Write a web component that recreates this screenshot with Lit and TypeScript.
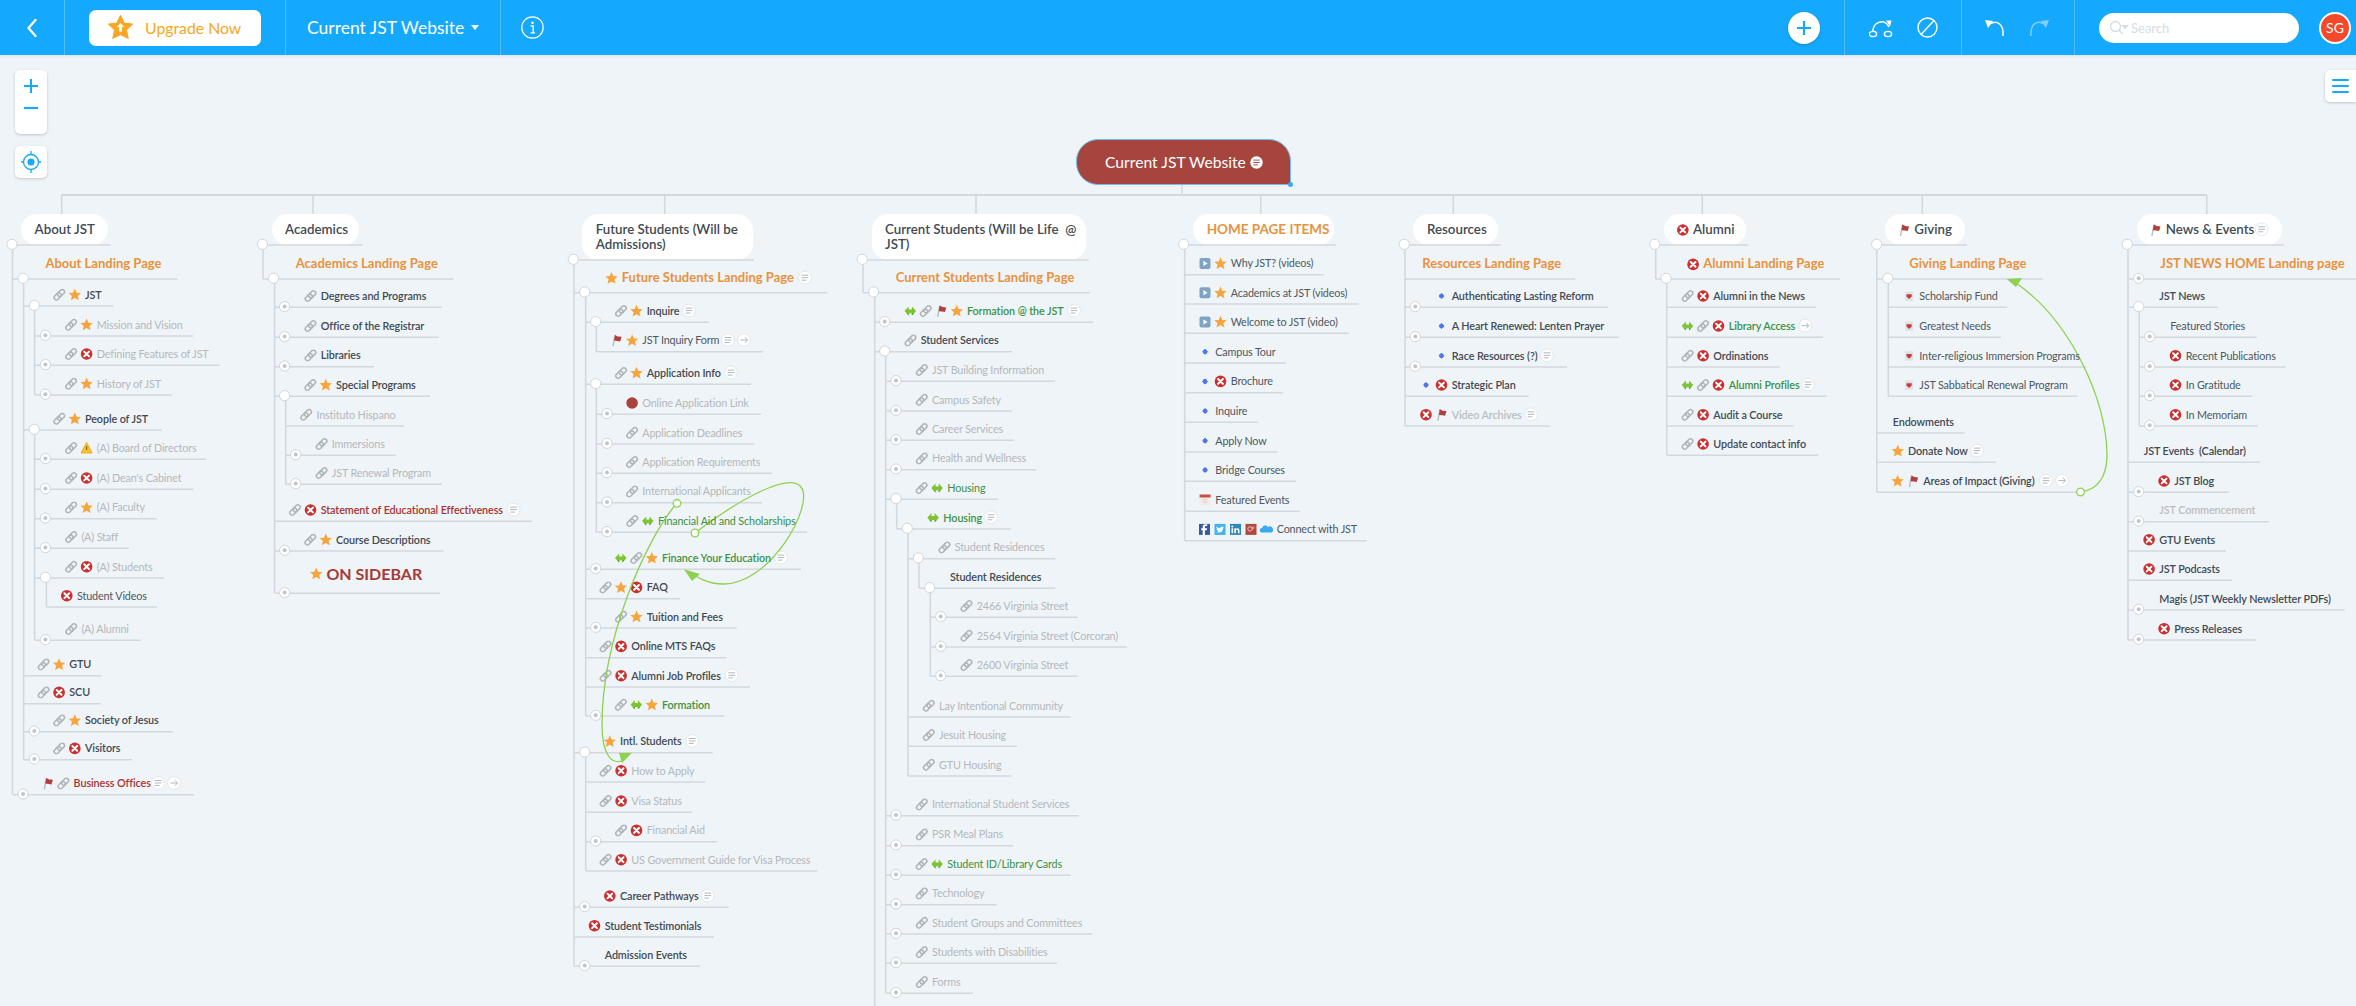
import { LitElement, html, css, svg } from "lit";
import { customElement } from "lit/decorators.js";

type Node = { t: string; x: number; l: number; x0: number; x1: number; c: string; i: string; tog: number; b?: { n?: number; a?: number }; cy?: number };
const N = (t: string, x: number, l: number, x0: number, x1: number, c: string, i = "", tog = 0, b?: { n?: number; a?: number }, cy?: number): Node => ({ t, x, l, x0, x1, c, i, tog, b, cy });

// tog > 0: toggle with dot, tog < 0: open (expanded) toggle
const nodes: Node[] = [
  // About
  N("About JST", 34.6, 245, 12, 110.7, "top", "", -12),
  N("About Landing Page", 45.4, 279, 13, 177.5, "o", "", -23.2),
  N("JST", 85, 306, 24, 113.6, "b", "c s", -34.3),
  N("Mission and Vision", 96.8, 336, 35, 193, "g", "c s", 45.4),
  N("Defining Features of JST", 96.8, 365.3, 35, 219.6, "g", "c x", 45.4),
  N("History of JST", 96.8, 395, 35, 172, "g", "c s", 45.4),
  N("People of JST", 85, 430, 24, 162, "b", "c s", -34.3),
  N("(A) Board of Directors", 96.8, 459.3, 35, 206.4, "g", "c w", 45.4),
  N("(A) Dean's Cabinet", 96.8, 489.3, 35, 193.6, "g", "c x", 45.4),
  N("(A) Faculty", 96.8, 518.7, 35, 156.8, "g", "c s", 45.4),
  N("(A) Staff", 81.4, 548.3, 35, 129, "g", "c", 45.4),
  N("(A) Students", 96.8, 578, 35, 164, "g", "c x", -45.4),
  N("Student Videos", 77, 607, 46.4, 157, "r", "x"),
  N("(A) Alumni", 81.4, 640.3, 35, 141, "g", "c", 45.4),
  N("GTU", 69.3, 675.7, 24, 101.4, "b", "c s"),
  N("SCU", 69.3, 703.7, 24, 100.7, "b", "c x"),
  N("Society of Jesus", 85, 731.7, 24, 172.9, "b", "c s", 34.3),
  N("Visitors", 85, 759.7, 24, 132, "b", "c x", 34.3),
  N("Business Offices", 73.6, 794.7, 13, 194, "rd", "f c", 23, { n: 158, a: 174 }),
  // Academics
  N("Academics", 285, 245, 263, 362.5, "top", "", -262.5),
  N("Academics Landing Page", 295.7, 279, 263, 453.6, "o", "", -273.6),
  N("Degrees and Programs", 320.7, 307.3, 275, 441.8, "b", "c", 284.6),
  N("Office of the Registrar", 320.7, 337.3, 275, 438.6, "b", "c", 284.6),
  N("Libraries", 320.7, 366.7, 275, 374, "b", "c", 284.6),
  N("Special Programs", 336, 396.3, 275, 430, "b", "c s", -284.6),
  N("Instituto Hispano", 316.4, 426, 285.7, 404, "g", "c"),
  N("Immersions", 331.8, 455.3, 285.7, 395.7, "g", "c", 295.7),
  N("JST Renewal Program", 331.8, 484.3, 285.7, 442, "g", "c", 295.7),
  N("Statement of Educational Effectiveness", 320.7, 521.3, 275, 532, "rd", "c x", 0, { n: 513.6 }),
  N("Course Descriptions", 336, 551, 275, 443.6, "b", "c s", 284.6),
  N("ON SIDEBAR", 326.4, 593.3, 275, 440, "big", "s", 284.6),
  // Future
  N("Future Students (Will be\nAdmissions)", 595.7, 260, 574, 754, "top", "", -573.3, undefined, 229),
  N("Future Students Landing Page", 621.7, 292.7, 574, 827.3, "o", "s", -584.7, { n: 805 }),
  N("Inquire", 646.7, 322.3, 586, 709, "b", "c s", -595.7, { n: 689 }),
  N("JST Inquiry Form", 642.3, 351.7, 596.3, 762.7, "r", "f s", 0, { n: 728, a: 744 }),
  N("Application Info", 646.7, 384.3, 586, 751, "b", "c s", -595.7, { n: 731 }),
  N("Online Application Link", 642.3, 414.3, 596.3, 761, "g", "rd", 607),
  N("Application Deadlines", 642.3, 444, 596.3, 754.3, "g", "c", 607),
  N("Application Requirements", 642.3, 473.3, 596.3, 772, "g", "c", 607),
  N("International Applicants", 642.3, 502.7, 596.3, 762, "g", "c", 607),
  N("Financial Aid and Scholarships", 658, 532.3, 596.3, 807, "gr", "c g", 607),
  N("Finance Your Education", 662, 569.3, 586, 801, "grb", "g c s", 595.7, { n: 781 }),
  N("FAQ", 646.7, 598.7, 586, 680, "b", "c s x"),
  N("Tuition and Fees", 646.7, 628, 586, 736.7, "b", "c s", 595.7),
  N("Online MTS FAQs", 631.3, 657.7, 586, 726.7, "b", "c x"),
  N("Alumni Job Profiles", 631.3, 687, 586, 750, "b", "c x", 0, { n: 731.7 }),
  N("Formation", 662, 716, 586, 724.3, "grb", "c g s", 595.7),
  N("Intl. Students", 620, 752.7, 574, 712.7, "b", "s", -584.7, { n: 692.3 }),
  N("How to Apply", 631.3, 782, 586, 705.3, "g", "c x"),
  N("Visa Status", 631.3, 812.3, 586, 691.7, "g", "c x"),
  N("Financial Aid", 646.7, 841.7, 586, 717, "g", "c x", 595.7),
  N("US Government Guide for Visa Process", 631.3, 871, 586, 817.3, "g", "c x"),
  N("Career Pathways", 620, 907.3, 574, 728.7, "b", "x", 584.7, { n: 707.7 }),
  N("Student Testimonials", 604.7, 937, 574, 713.7, "b", "x"),
  N("Admission Events", 604.7, 966.3, 574, 700, "b", "", 584.7),
  // Current
  N("Current Students (Will be Life  @\nJST)", 885, 260, 863, 1088.7, "top", "", -862.3, undefined, 229),
  N("Current Students Landing Page", 895.7, 292.7, 863, 1090, "o", "", -873.7),
  N("Formation @ the JST", 967, 322.3, 875, 1093.3, "grb", "g c f s", 884.7, { n: 1074 }),
  N("Student Services", 920.7, 351.7, 875, 1012, "b", "c", -884.7),
  N("JST Building Information", 932, 381.3, 886, 1055.3, "g", "c", 896),
  N("Campus Safety", 932, 411, 886, 1012, "g", "c", 896),
  N("Career Services", 932, 440.3, 886, 1014, "g", "c", 896),
  N("Health and Wellness", 932, 469.7, 886, 1036.3, "g", "c", 896),
  N("Housing", 947.3, 499.3, 886, 998, "gr", "c g", -896),
  N("Housing", 943.3, 529, 896.7, 1010.7, "grb", "g", -907.3, { n: 991 }),
  N("Student Residences", 954.7, 558.7, 908, 1055.3, "g", "c", -918.3),
  N("Student Residences", 950, 588.3, 919, 1055.3, "b", "", -929.7),
  N("2466 Virginia Street", 976.7, 617.3, 930.3, 1077.7, "g", "c", 940.7),
  N("2564 Virginia Street (Corcoran)", 976.7, 647, 930.3, 1126.7, "g", "c", 940.7),
  N("2600 Virginia Street", 976.7, 676.3, 930.3, 1077.7, "g", "c", 940.7),
  N("Lay Intentional Community", 939, 717, 908, 1070.7, "g", "c"),
  N("Jesuit Housing", 939, 746.3, 908, 1017, "g", "c"),
  N("GTU Housing", 939, 776, 908, 1011.3, "g", "c"),
  N("International Student Services", 932, 815.7, 886, 1078.7, "g", "c", 896),
  N("PSR Meal Plans", 932, 845.7, 886, 1013.3, "g", "c", 896),
  N("Student ID/Library Cards", 947.3, 875.3, 886, 1070.7, "gr", "c g", 896),
  N("Technology", 932, 904.7, 886, 996.7, "g", "c", 896),
  N("Student Groups and Committees", 932, 934, 886, 1092.3, "g", "c", 896),
  N("Students with Disabilities", 932, 963.3, 886, 1057, "g", "c", 896),
  N("Forms", 932, 993.3, 886, 973, "g", "c", 896),
  // Home page
  N("HOME PAGE ITEMS", 1206.7, 245, 1184, 1336, "topo", "", -1183.7),
  N("Why JST? (videos)", 1230.7, 274.7, 1185, 1323.7, "r", "p s"),
  N("Academics at JST (videos)", 1230.7, 304, 1185, 1358.7, "r", "p s"),
  N("Welcome to JST (video)", 1230.7, 333.3, 1185, 1348.7, "r", "p s"),
  N("Campus Tour", 1215.3, 363, 1185, 1286, "r", "d"),
  N("Brochure", 1230.7, 392.7, 1185, 1282.7, "r", "d x"),
  N("Inquire", 1215.3, 422.3, 1185, 1258.3, "r", "d"),
  N("Apply Now", 1215.3, 452, 1185, 1277.3, "r", "d"),
  N("Bridge Courses", 1215.3, 481.3, 1185, 1296, "r", "d"),
  N("Featured Events", 1215.3, 511.3, 1185, 1299.7, "r", "cal"),
  N("Connect with JST", 1276.7, 540.7, 1185, 1366.7, "r", "fb tw in gp cl"),
  // Resources
  N("Resources", 1427, 245, 1404, 1500.7, "top", "", -1404.3),
  N("Resources Landing Page", 1422.3, 279, 1405, 1575.3, "o"),
  N("Authenticating Lasting Reform", 1451.7, 307.3, 1405, 1607.7, "b", "d", 1415.3),
  N("A Heart Renewed: Lenten Prayer", 1451.7, 337.3, 1405, 1618.7, "b", "d", 1415.3),
  N("Race Resources (?)", 1451.7, 367, 1405, 1567, "b", "d", 1415.3, { n: 1547 }),
  N("Strategic Plan", 1451.7, 396.3, 1405, 1528.7, "b", "d x"),
  N("Video Archives", 1451.7, 426, 1405, 1549.7, "gb", "x f", 0, { n: 1531 }),
  // Alumni
  N("Alumni", 1693, 245, 1654, 1748.3, "top", "x", -1654.7),
  N("Alumni Landing Page", 1703.3, 279, 1655.7, 1840, "o", "x", -1666),
  N("Alumni in the News", 1713.3, 307.3, 1667, 1816.3, "b", "c x"),
  N("Library Access", 1728.7, 337.3, 1667, 1823, "grb", "g c x", 0, { a: 1805.3 }),
  N("Ordinations", 1713.3, 367, 1667, 1779.7, "b", "c x"),
  N("Alumni Profiles", 1728.7, 396.3, 1667, 1826.7, "grb", "g c x", 0, { n: 1808 }),
  N("Audit a Course", 1713.3, 426, 1667, 1794.3, "b", "c x"),
  N("Update contact info", 1713.3, 455.3, 1667, 1818.3, "b", "c x"),
  // Giving
  N("Giving", 1914.3, 245, 1876, 1967, "top", "f", -1876.7),
  N("Giving Landing Page", 1909.3, 279, 1877, 2042.7, "o", "", -1887.7),
  N("Scholarship Fund", 1919.3, 307.3, 1888.3, 2007.3, "r", "rb"),
  N("Greatest Needs", 1919.3, 337.3, 1888.3, 2001, "r", "rb"),
  N("Inter-religious Immersion Programs", 1919.3, 367, 1888.3, 2086.3, "r", "rb"),
  N("JST Sabbatical Renewal Program", 1919.3, 396.3, 1888.3, 2077.3, "r", "rb"),
  N("Endowments", 1892.7, 433, 1877, 1964.7, "b"),
  N("Donate Now", 1908, 462.3, 1877, 1995.7, "b", "s", 0, { n: 1977 }),
  N("Areas of Impact (Giving)", 1923.3, 492.3, 1877, 2080.7, "b", "s f", 0, { n: 2046, a: 2062 }),
  // News
  N("News & Events", 2165.7, 245, 2127, 2284, "top", "f", -2127.3, { n: 2261.7 }),
  N("JST NEWS HOME Landing page", 2160.3, 279, 2128, 2356, "o", "", 2138.7),
  N("JST News", 2159.3, 307.3, 2128, 2218, "b", "", -2138.7),
  N("Featured Stories", 2170.3, 337.3, 2139.3, 2256.7, "r", "", 2149.7),
  N("Recent Publications", 2185.7, 367, 2139.3, 2285.7, "r", "x", 2149.7),
  N("In Gratitude", 2185.7, 396.3, 2139.3, 2252.3, "r", "x", 2149.7),
  N("In Memoriam", 2185.7, 426, 2139.3, 2258, "r", "x", 2149.7),
  N("JST Events  (Calendar)", 2143.7, 462.3, 2128, 2260, "b"),
  N("JST Blog", 2174.3, 492.3, 2128, 2228.7, "b", "x", 2138.7),
  N("JST Commencement", 2159.3, 521.7, 2128, 2268.7, "gb", "", 2138.7),
  N("GTU Events", 2159.3, 551, 2128, 2226, "b", "x"),
  N("JST Podcasts", 2159.3, 580.3, 2128, 2232, "b", "x"),
  N("Magis (JST Weekly Newsletter PDFs)", 2159.3, 610, 2128, 2344.7, "b", "", 2138.7),
  N("Press Releases", 2174.3, 640, 2128, 2256, "b", "x", 2138.7),
];

const trunks: number[][] = [
  [12.5, 245, 794.7], [23.6, 279, 759.7], [34.6, 306, 395], [34.6, 430, 640.3], [46.4, 578, 607],
  [263, 245, 279], [274.6, 279, 593.3], [285.7, 396, 484.3],
  [574, 260, 966.3], [585.7, 293, 716], [596.3, 322, 351.7], [596.3, 384, 532.3], [585.7, 752, 871],
  [863, 260, 292.7], [874.7, 293, 1006], [885.7, 352, 993.3], [896.7, 499, 529], [908, 529, 776], [919, 558, 588.3], [930.3, 588, 676.3],
  [1184.7, 245, 540.7], [1405, 245, 426], [1655.7, 245, 279], [1666.7, 279, 455.3],
  [1876.7, 245, 492.3], [1888.3, 279, 396.3], [2128, 245, 640], [2139.3, 307, 426],
];
const drops = [61.7, 313, 664.7, 976, 1260.7, 1453.3, 1702.3, 1922.3, 2206.7];
const pills = [
  [21, 108, 214, 245], [272, 359, 214, 245], [582, 752.7, 214, 260], [872, 1086, 214, 260],
  [1193, 1334, 214, 245], [1413.3, 1498, 214, 245], [1664, 1746.3, 214, 245], [1885.3, 1965, 214, 245], [2136.7, 2282, 214, 245],
];

function icon(k: string, x: number, y: number) {
  const g = (c: unknown) => svg`<g transform="translate(${x} ${y})">${c}</g>`;
  switch (k) {
    case "c":
      return g(svg`<g transform="rotate(-45)" fill="none" stroke="#aeb4b8" stroke-width="1.5"><rect x="-6.4" y="-2.3" width="8" height="4.6" rx="2.3"/><rect x="-1.6" y="-2.3" width="8" height="4.6" rx="2.3"/></g>`);
    case "s":
      return g(svg`<path d="M0-6.2 1.8-2 6.2-1.7 2.9 1.2 4 5.6 0 3.3-4 5.6-2.9 1.2-6.2-1.7-1.8-2Z" fill="#f7a43c"/>`);
    case "x":
      return g(svg`<circle r="5.8" fill="#c9302f"/><path d="M-2.4-2.4 2.4 2.4M2.4-2.4-2.4 2.4" stroke="#fff" stroke-width="2" stroke-linecap="round"/>`);
    case "w":
      return g(svg`<path d="M0-5.5 5.6 5H-5.6Z" fill="#f5bf2e" stroke="#eeb024" stroke-linejoin="round"/><rect x="-.6" y="-2" width="1.2" height="4" fill="#8a6b12"/>`);
    case "f":
      return g(svg`<path d="M-3.6 6-1.6-5.5" stroke="#b9bcbe" stroke-width="1.4"/><path d="M-1.6-5.5 1.2-4 5-3.6 3.6 1 .8.6-2.6.2Z" fill="#b03f3d"/>`);
    case "g":
      return g(svg`<path d="M-5.8 0-1.6-4.6V-1.6H1.6V-4.6L5.8 0 1.6 4.6V1.6H-1.6V4.6Z" fill="#7cc52f"/><path d="M-3.8 2.2-1.6 4.6V1.6H1.6V4.6L3.8 2.2Z" fill="#57a51f"/>`);
    case "d":
      return g(svg`<path d="M0-3 2.8 0 0 3-2.8 0Z" fill="#4f76ee"/><circle r="2.3" fill="#4f76ee"/>`);
    case "p":
      return g(svg`<rect x="-5.5" y="-5.5" width="11" height="11" rx="2" fill="#7ea3c4"/><path d="M-1.6-2.6 2.6 0-1.6 2.6Z" fill="#fff"/>`);
    case "rd":
      return g(svg`<circle r="5.8" fill="#a8433e"/>`);
    case "rb":
      return g(svg`<rect x="-4" y="-4.5" width="8" height="9.5" fill="#dfe3e6"/><path d="M-2.6-1.8H2.6V.6L0 3-2.6.6Z" fill="#c93a3a"/>`);
    case "cal":
      return g(svg`<rect x="-5.5" y="-5.5" width="11" height="11" fill="#f3ecea"/><rect x="-5.5" y="-5.5" width="11" height="3" fill="#c8503f"/><path d="M-3-.5H3M-3 2H3M0-1.5V4" stroke="#e3c4be" stroke-width=".6"/>`);
    case "fb":
      return g(svg`<rect x="-5.5" y="-5.5" width="11" height="11" fill="#3b5a9a"/><path d="M.4 5.5V.8H2.3L2.6-1.2H.4V-2.4C.4-3.1.8-3.4 1.4-3.4H2.7V-5.2H.8C-1-5.2-1.8-4.2-1.8-2.6V-1.2H-3.2V.8H-1.8V5.5Z" fill="#fff"/>`);
    case "tw":
      return g(svg`<rect x="-5.5" y="-5.5" width="11" height="11" fill="#3eb4ea"/><path d="M-3.6 2.6C-1 4 3.2 3 3.2-1.6L4-2.6 2.8-2.4C2-3.6 0-3 .2-1.2-1.2-1.2-2.4-2-3.2-3-3.8-2-3.4-1-2.8-.4L-3.4-.6C-3.4.4-2.6 1-2 1.2H-2.6C-2.4 1.8-1.8 2.2-1.2 2.2-1.8 2.6-2.8 2.8-3.6 2.6Z" fill="#fff"/>`);
    case "in":
      return g(svg`<rect x="-5.5" y="-5.5" width="11" height="11" fill="#2f86ba"/><rect x="-4" y="-1.2" width="1.6" height="5" fill="#fff"/><circle cx="-3.2" cy="-3" r="1" fill="#fff"/><path d="M-1.2 3.8V-1.2H.4V-.4C1.4-1.8 4-1.6 4 1V3.8H2.4V1.4C2.4 0 .4 0 .4 1.4V3.8Z" fill="#fff"/>`);
    case "gp":
      return g(svg`<rect x="-5.5" y="-5.5" width="11" height="11" fill="#b0493f"/><circle cx="-1" cy="-.5" r="2.2" fill="none" stroke="#e8c1bc" stroke-width="1"/><path d="M2-3V0M.5-1.5H3.5" stroke="#e8c1bc" stroke-width=".8"/>`);
    case "cl":
      return g(svg`<path d="M-4.5 3.2A2.3 2.3 0 0 1-4.4-1.4 3.2 3.2 0 0 1 1.4-2.4 2.8 2.8 0 0 1 5 3.2Z" fill="#38a9ee"/>`);
  }
  return null;
}

@customElement("app-root")
export class AppRoot extends LitElement {
  static styles = css`
    :host { display: flex; flex-direction: column; height: 1006px; overflow: hidden; background: #eff4f8; font-family: Lato, "Open Sans", sans-serif; }
    .hdr { display: flex; align-items: stretch; height: 55px; flex: none; background: #15a9fe; color: #fff; position: relative; z-index: 2; box-shadow: 0 1px 3px rgba(60,90,110,.15); }
    .sec { display: flex; align-items: center; border-right: 1px solid rgba(255,255,255,.25); flex: none; box-sizing: border-box; }
    .s1 { width: 65px; justify-content: center; }
    .s2 { width: 221px; padding-left: 24px; }
    .s3 { width: 215px; padding-left: 21px; gap: 7px; font-size: 17.5px; }
    .s4 { flex: 1; padding-left: 20px; justify-content: flex-start; gap: 0; position: relative; }
    .s5 { width: 117px; padding-left: 24px; gap: 24px; }
    .s6 { width: 113px; padding-left: 22px; gap: 22px; }
    .s7 { flex: none; width: 281px; display: flex; align-items: center; padding-left: 24px; box-sizing: border-box; }
    .up { display: flex; align-items: center; gap: 12px; width: 172px; height: 36px; box-sizing: border-box; padding-left: 19px; background: #fff; border-radius: 7px; color: #f9a623; font-size: 15.8px; }
    .plus { margin-left: auto; margin-right: 24px; width: 32px; height: 32px; border-radius: 50%; background: #fff; display: flex; align-items: center; justify-content: center; box-shadow: 0 1px 3px rgba(0,60,110,.3); }
    .search { width: 200px; height: 30px; border-radius: 15px; background: #fff; display: flex; align-items: center; padding-left: 10px; gap: 2px; box-sizing: border-box; color: #d5dde2; font-size: 13px; }
    .av { margin-left: 20px; width: 32px; height: 32px; border-radius: 50%; background: #f4492b; border: 2px solid #fff; box-sizing: border-box; display: flex; align-items: center; justify-content: center; font-size: 14px; color: #fff; }
    .cv { flex: 1; position: relative; overflow: hidden; }
    .lay { position: absolute; left: 0; top: 0; width: 2356px; height: 951px; }
    .panel { position: absolute; background: #fff; border-radius: 5px; box-shadow: 0 1px 3px rgba(60,80,100,.28); display: flex; flex-direction: column; align-items: center; justify-content: center; }
    .pz { left: 15px; top: 15px; width: 32px; height: 64px; gap: 12.7px; justify-content: flex-start; padding-top: 9px; box-sizing: border-box; }
    .pt { left: 15px; top: 91px; width: 32px; height: 32px; }
    .pm { right: 0; top: 15px; width: 31px; height: 32px; border-radius: 5px 0 0 5px; gap: 4px; }
    .pm i { display: block; width: 17px; height: 2px; background: #15a9fe; border-radius: 1px; }
    .pill { position: absolute; background: #fff; border-radius: 16px; }
    .root { position: absolute; left: 1076px; top: 84px; width: 215px; height: 46px; box-sizing: border-box; background: #a6453e; border: 1.5px solid #6cbdf2; border-radius: 22px 22px 0 22px; color: #fff; font-size: 15.7px; display: flex; align-items: center; padding-left: 28px; gap: 4.5px; }
    .root svg { flex: none; }
    .hd { position: absolute; right: -3px; bottom: -3px; width: 5px; height: 5px; border-radius: 50%; background: #3fa9f5; }
    .n { position: absolute; white-space: pre; line-height: 15px; }
    .b { font-size: 10.8px; letter-spacing: -.1px; font-weight: 600; color: #3f4a52; }
    .r { font-size: 10.8px; letter-spacing: -.15px; color: #4d5860; }
    .g { font-size: 10.8px; letter-spacing: -.15px; color: #b3b8bb; }
    .gb { font-size: 10.8px; letter-spacing: -.1px; font-weight: 600; color: #b9bec1; }
    .gr { font-size: 10.8px; letter-spacing: -.15px; color: #3c9243; }
    .grb { font-size: 10.8px; letter-spacing: -.1px; font-weight: 600; color: #3c9243; }
    .rd { font-size: 10.8px; letter-spacing: -.1px; font-weight: 600; color: #a8322f; }
    .o { font-size: 13px; font-weight: 700; color: #e9923e; }
    .big { font-size: 16px; font-weight: 700; color: #a63a36; }
    .top { font-size: 13.3px; font-weight: 600; color: #3f4a52; }
    .topo { font-size: 13.5px; font-weight: 700; color: #e9923e; }
  `;

  render() {
    const cyOf = (n: Node) => {
      if (n.cy) return n.cy;
      if (n.c === "top" || n.c === "topo") return n.l - 16;
      if (n.c === "o") return n.l - 15.3;
      if (n.c === "big") return n.l - 20.3;
      return n.l - 12;
    };
    return html`
      <div class="hdr">
        <div class="sec s1">
          <svg width="14" height="20" viewBox="0 0 14 20"><path d="M10.5 2 3.5 10 10.5 18" fill="none" stroke="#fff" stroke-width="2.4" stroke-linecap="round" stroke-linejoin="round"/></svg>
        </div>
        <div class="sec s2">
          <div class="up">
            <svg width="25" height="25" viewBox="-12.5 -12.5 25 25"><path d="M0-12.2 3.8-4.4 12.2-3.4 6 2.4 7.8 11 0 7.2-7.8 11-6 2.4-12.2-3.4-3.8-4.4Z" fill="#f9a623" stroke="#f9a623" stroke-width="1" stroke-linejoin="round"/><path d="M0-4.5 3.6-.5H1.4V4.2H-1.4V-.5H-3.6Z" fill="#fff"/></svg>
            <span>Upgrade Now</span>
          </div>
        </div>
        <div class="sec s3">
          <span>Current JST Website</span>
          <svg width="8" height="5" viewBox="0 0 8 5"><path d="M0 0H8L4 5Z" fill="#fff"/></svg>
        </div>
        <div class="sec s4">
          <svg width="23" height="23" viewBox="0 0 23 23"><circle cx="11.5" cy="11.5" r="10.7" fill="none" stroke="#fff" stroke-width="1.2"/><circle cx="11.5" cy="6.8" r="1.2" fill="#fff"/><path d="M9.6 10H12.2V16.4M9.6 16.8H14" fill="none" stroke="#fff" stroke-width="1.3"/></svg>
          <div class="plus"><svg width="14" height="14" viewBox="0 0 14 14"><path d="M7 0V14M0 7H14" stroke="#15a9fe" stroke-width="2.2"/></svg></div>
        </div>
        <div class="sec s5">
          <svg width="24" height="20" viewBox="0 0 24 20" fill="none" stroke="#fff" stroke-width="1.4"><ellipse cx="4" cy="16" rx="3.6" ry="2.6"/><ellipse cx="19" cy="16" rx="3.6" ry="2.6"/><path d="M4 13C4 6 10 3 15 4 18 5 19 7 20 9"/><path d="M17 2.5 22.5 2.5 21 8.5Z" fill="#fff" stroke="none"/></svg>
          <svg width="21" height="21" viewBox="0 0 21 21" fill="none" stroke="#fff" stroke-width="1.4"><circle cx="10.5" cy="10.5" r="9.5"/><path d="M4 17.5 17 3.5"/></svg>
        </div>
        <div class="sec s6">
          <svg width="22" height="20" viewBox="0 0 22 20" fill="none"><path d="M6 6C12 2 20 5 19 18" stroke="#fff" stroke-width="1.5"/><path d="M1 2 9 3 4 10Z" fill="#fff"/></svg>
          <svg width="22" height="20" viewBox="0 0 22 20" fill="none" opacity=".45"><path d="M16 6C10 2 2 5 3 18" stroke="#fff" stroke-width="1.5"/><path d="M21 2 13 3 18 10Z" fill="#fff"/></svg>
        </div>
        <div class="s7">
          <div class="search">
            <svg width="20" height="16" viewBox="0 0 20 16" fill="none" stroke="#d5dde2" stroke-width="1.3"><circle cx="6.5" cy="6.5" r="5"/><path d="M10 10 13.5 14"/><path d="M12 5H20L16 9Z" fill="#d5dde2" stroke="none"/></svg>
            <span>Search</span>
          </div>
          <div class="av">SG</div>
        </div>
      </div>
      <div class="cv">
        ${pills.map((p) => html`<div class="pill" style="left:${p[0]}px;top:${p[2] - 55}px;width:${p[1] - p[0]}px;height:${p[3] - p[2]}px"></div>`)}
        <svg class="lay" viewBox="0 55 2356 951">
          <g fill="none" stroke="#d2d9de" stroke-width="1.6">
            <path d="M61.7 195H2206.7" stroke-width="2"/>
            ${drops.map((x) => svg`<path d="M${x} 195V214"/>`)}
            <path d="M1182 185V195"/>
            ${trunks.map((t) => svg`<path d="M${t[0]} ${t[1]}V${t[2]}"/>`)}
            ${nodes.map((n) => svg`<path d="M${n.x0} ${n.l}H${n.x1}"/>`)}
          </g>
          ${nodes.filter((n) => n.tog).map((n) => {
            const cx = Math.abs(n.tog);
            const cy = n.l - 0.7;
            return svg`<circle cx=${cx} cy=${cy} r="5.1" fill="#fff" stroke="#cfd6db" stroke-width="1"/>${n.tog > 0 ? svg`<circle cx=${cx} cy=${cy} r="2" fill="#bcc6cd"/>` : null}`;
          })}
          ${nodes.map((n) => {
            const ks = n.i ? n.i.split(" ") : [];
            const cy = cyOf(n) + 0.7;
            return ks.map((k, j) => icon(k, n.x - 10.2 - (ks.length - 1 - j) * 15.5, n.c === "top" ? n.l - 15 : cy));
          })}
          ${nodes.map((n) => {
            const cy = cyOf(n) + 0.3;
            const out: unknown[] = [];
            if (n.b?.n) out.push(svg`<g transform="translate(${n.b.n} ${cy})"><circle r="6.4" fill="#fff" stroke="#dfe5e8" stroke-width=".9"/><path d="M-3.4-2.5H3.4M-3.4 0H3.4M-3.4 2.5H1.4" stroke="#aeb8be" stroke-width="1"/></g>`);
            if (n.b?.a) out.push(svg`<g transform="translate(${n.b.a} ${cy})"><circle r="6.4" fill="#fff" stroke="#dfe5e8" stroke-width=".9"/><path d="M-3.6 0H3.2M.8-2.8 3.6 0 .8 2.8" fill="none" stroke="#aeb8be" stroke-width="1"/></g>`);
            return out;
          })}
          <g fill="none" stroke="#8dd14f" stroke-width="1.3">
            <path d="M695 533C745 495 790 473 801 487 815 505 770 585 723 584 707 584 697 577 690 572"/>
            <path d="M677 503C645 540 602 640 602 725 602 755 612 766 624 760"/>
            <path d="M2081 492C2095 490 2107 480 2107 455 2107 400 2070 320 2016 283"/>
          </g>
          <g fill="#8dd14f">
            <path d="M684 569.3 700 574 692 581Z"/>
            <path d="M632 752.7 619 753 622 763Z"/>
            <path d="M2006.7 279 2022 278 2016 287Z"/>
          </g>
          <g fill="#fff" stroke="#8dd14f" stroke-width="1.3">
            <circle cx="695" cy="533" r="3.8"/>
            <circle cx="677" cy="503.3" r="3.8"/>
            <circle cx="2080.5" cy="492" r="3.8"/>
          </g>
        </svg>
        ${nodes.map((n) => html`<div class="n ${n.c}" style="left:${n.x}px;top:${cyOf(n) - 55 - 7.5}px">${n.t}</div>`)}
        <div class="root">
          <span>Current JST Website</span>
          <svg width="13" height="13" viewBox="-6.5 -6.5 13 13"><circle r="6.2" fill="#fff"/><path d="M-3.2-2.4H3.2M-3.2 0H3.2M-3.2 2.4H1.4" stroke="#a6453e" stroke-width=".9"/></svg>
          <div class="hd"></div>
        </div>
        <div class="panel pz">
          <svg width="14" height="14" viewBox="0 0 14 14"><path d="M7 0V14M0 7H14" stroke="#15a9fe" stroke-width="2"/></svg>
          <svg width="14" height="4" viewBox="0 0 14 4"><path d="M0 2H14" stroke="#15a9fe" stroke-width="2.2"/></svg>
        </div>
        <div class="panel pt">
          <svg width="22" height="24" viewBox="-11 -12 22 24" fill="none" stroke="#15a9fe" stroke-width="1.3"><circle r="7.5"/><circle r="3.6" fill="#15a9fe" stroke="none"/><path d="M0-11V-7.5M0 7.5V11M-10 0H-7.5M7.5 0H10"/></svg>
        </div>
        <div class="panel pm"><i></i><i></i><i></i></div>
      </div>
    `;
  }
}
